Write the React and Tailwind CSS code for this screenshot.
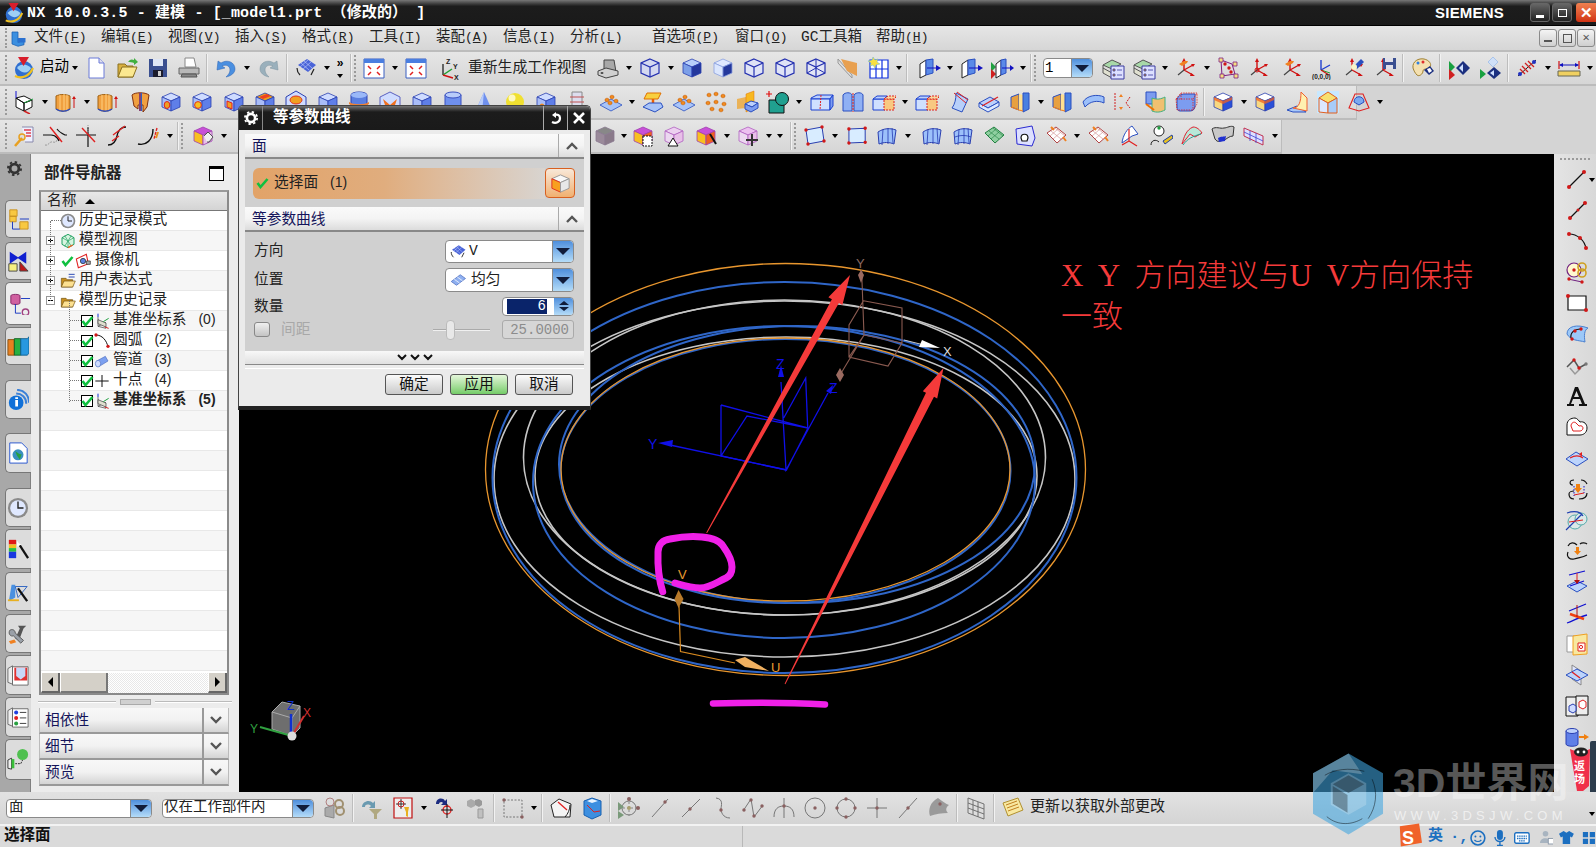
import React from "react";

const Cube = ({ t = "#cfdcff", l = "#a9bdf7", r = "#5f7fe8", s = "#2a3fb0", children }) => (
  <>
    <path d="M12 3l9 4-9 4-9-4z" fill={t} stroke={s} strokeWidth=".8" />
    <path d="M3 7l9 4v10l-9-4z" fill={l} stroke={s} strokeWidth=".8" />
    <path d="M21 7l-9 4v10l9-4z" fill={r} stroke={s} strokeWidth=".8" />
    {children}
  </>
);
const Wire = ({ s = "#2430b0", f = "#d4d8f0" }) => (
  <>
    <path d="M12 3l9 4v10l-9 4-9-4V7z" fill={f} stroke={s} strokeWidth="1.2" />
    <path d="M3 7l9 4 9-4M12 11v10" fill="none" stroke={s} strokeWidth="1.2" />
  </>
);
const Axes = ({ c = "#d01010", o = "#444" }) => (
  <>
    <path d="M10 14V4M10 14l9-5M10 14l9 5" fill="none" stroke={c} strokeWidth="1.4" />
    <path d="M10 2l-2 4h4zM21 8l-4 0 2 3zM21 20l-4-3-1 3z" fill={c} />
    <path d="M10 14l-6 5" stroke={o} strokeWidth="1.2" />
  </>
);
const Dot = ({ x, y, r = 1.7, c = "#d01818" }) => <circle cx={x} cy={y} r={r} fill={c} />;
const Orange = ({ x, y }) => <path d={`M${x} ${y}l2-1 2 1v2l-2 1-2-1z`} fill="#f08a20" stroke="#b85000" strokeWidth=".4" />;
const Pat = () => (
  <>
    <path d="M1 15l11-6 11 6-11 6z" fill="#a8c4f8" stroke="#2a4fc0" strokeWidth=".8" />
    <Orange x={6} y={9} /><Orange x={11} y={6} /><Orange x={15} y={10} /><Orange x={9} y={12} />
  </>
);
const Shell = () => (
  <>
    <path d="M3 7l8-3v16l-8-3z" fill="#e8a040" stroke="#2a4fc0" />
    <path d="M11 4l4 1v16l-4-1z" fill="#ffe090" />
    <path d="M15 3h6v16l-6 3z" fill="#4a80e0" stroke="#2a4fc0" />
    <path d="M3 17l8 3 4 1" fill="none" stroke="#f08020" strokeWidth="1.2" />
  </>
);
const Sheet = ({ c = "#9cc0fa", s = "#2a3fb0" }) => <path d="M3 8c6-4 12-4 18-2l-2 14c-5-2-10-2-15 0z" fill={c} stroke={s} />;
const Quad = ({ rot = "" }) => (
  <>
    <path d="M4 6l16-3 2 14-16 3z" fill="#d8ecff" stroke="#2a3fb0" transform={rot} />
    <g transform={rot}><Dot x={4} y={6} /><Dot x={20} y={3} /><Dot x={22} y={17} /><Dot x={6} y={20} /></g>
  </>
);
const Stripes = ({ c = "#2438b0" }) => (
  <>
    <Sheet />
    <path d="M8 5l-1 16M13 4l0 16M17 4l1 15" stroke={c} strokeWidth=".8" />
  </>
);
const Face = ({ grid }) => (
  <>
    <path d="M3 9l9-6 10 8-9 8z" fill={grid ? "#8fcfa0" : "#fff"} stroke={grid ? "#208040" : "#b04040"} />
    <path d="M7 7l10 8M11 4l10 8M6 12l8-7M9 15l8-7" stroke={grid ? "#208040" : "#c88"} strokeWidth=".6" />
  </>
);

const I = {
  start: (
    <>
      <circle cx="12" cy="14" r="9" fill="#2f6fd0" />
      <path d="M5 12c4-5 10-4 14 0-2 5-8 7-14 0z" fill="#9fd0f5" />
      <path d="M3 20c6 3 14 1 18-8" stroke="#f0c020" strokeWidth="2.2" fill="none" />
      <path d="M6 1h11l-5.500 9z" fill="#d81e2c" />
    </>
  ),
  doc: (
    <>
      <path d="M5 2h10l5 5v15H5z" fill="#fff" stroke="#6a7ad8" />
      <path d="M15 2v5h5" fill="#dde" stroke="#6a7ad8" />
    </>
  ),
  folder: (
    <>
      <path d="M3 8h7l2 2h6v11H3z" fill="#d8b040" stroke="#8a7020" />
      <path d="M3 21l4-10h15l-4 10z" fill="#fbe890" stroke="#8a7020" />
      <path d="M13 6c2-3 4-3 6-2V2l4 4-4 3V7c-2-1-4-1-6-1z" fill="#40b040" />
    </>
  ),
  save: (
    <>
      <path d="M3 3h18v18H3z" fill="#3a4f90" />
      <path d="M7 3h10v7H7z" fill="#dfe6f5" />
      <path d="M7 14h10v7H7z" fill="#1c1c2c" />
      <path d="M12 15h3v5h-3z" fill="#d0d0d0" />
    </>
  ),
  print: (
    <>
      <path d="M8 2h9l2 9H8z" fill="#fff" stroke="#888" />
      <path d="M2 12h20v6H2z" fill="#b8b8b8" stroke="#666" />
      <path d="M5 18h14l1 3H4z" fill="#888" stroke="#555" />
    </>
  ),
  undo: <path d="M4 5l-1 9 8-2-3-2c4-2 8 0 8 4 0 3-2 5-4 7 5-1 9-4 9-8 0-7-8-10-14-6z" fill="#4a8fe0" stroke="#2a60b0" strokeWidth=".5" />,
  redo: <path d="M20 5l1 9-8-2 3-2c-4-2-8 0-8 4 0 3 2 5 4 7-5-1-9-4-9-8 0-7 8-10 14-6z" fill="#9ab0bc" stroke="#7a909c" strokeWidth=".5" />,
  surf: (
    <>
      <path d="M4 9l9-6 9 6-8 7z" fill="#4a64d8" />
      <path d="M7 7l8 7M10 5l8 7M6 11l8-7M9 13l8-7" stroke="#c8d4ff" strokeWidth=".6" />
      <path d="M3 12c0 3 1 5 3 7M20 13l-3 6" stroke="#222" strokeWidth="1.2" fill="none" />
    </>
  ),
  fit: (
    <>
      <path d="M2 3h20v19H2z" fill="#fff" stroke="#3a5fc0" />
      <path d="M2 3h20v4H2z" fill="#4a7ee0" />
      <path d="M6 10l3 3M18 10l-3 3M6 19l3-3M18 19l-3-3" stroke="#e02020" strokeWidth="1.5" />
    </>
  ),
  csysc: (
    <>
      <path d="M7 19V8" stroke="#111" strokeWidth="1.2" />
      <path d="M7 19l9-6" stroke="#20a030" strokeWidth="1.5" />
      <path d="M7 19l10 3" stroke="#d01010" strokeWidth="1.5" />
      <text x="10" y="8" fontSize="7" fontWeight="700" fontFamily="Liberation Sans" fill="#222">Z</text>
      <text x="17" y="13" fontSize="7" fontWeight="700" fontFamily="Liberation Sans" fill="#222">Y</text>
      <text x="18" y="24" fontSize="7" fontWeight="700" fontFamily="Liberation Sans" fill="#222">X</text>
    </>
  ),
  part: (
    <>
      <path d="M8 4h10l2 12H8z" fill="#a8a8a8" stroke="#444" />
      <path d="M2 15l8-3 12 3v4l-12 3-8-3z" fill="#d0d0d0" stroke="#444" />
      <ellipse cx="6" cy="17" rx="1.500" ry="1" fill="#444" />
    </>
  ),
  wire: <Wire />,
  solid: <Cube t="#b8d0fa" l="#7c9fe8" r="#24389c" />,
  solid2: <Cube t="#dfe8ff" l="#dbe6fd" r="#24389c" s="#8aa0e0" />,
  wirel: <Wire f="#dfe3f6" />,
  wire3: (
    <>
      <Wire f="#e2e5f5" />
      <path d="M3 17l9-5 9 5M12 3v9" stroke="#2430b0" fill="none" />
    </>
  ),
  clip: (
    <>
      <path d="M3 3l14 16v3L3 7z" fill="#ddd" stroke="#999" />
      <path d="M6 3l16 4v13L12 15z" fill="#e8a050" />
    </>
  ),
  grid: (
    <>
      <path d="M4 4h18v18H4zM10 4v18M16 4v18M4 13h18" fill="#fff" stroke="#1030e0" strokeWidth="1.2" />
      <path d="M7 1l2 3 3-1-1 3 3 2-4 1-1 3-2-3-3 1 1-3-3-2 4-1z" fill="#f8e040" stroke="#60b0d0" strokeWidth=".5" />
    </>
  ),
  mv1: (
    <>
      <path d="M3 8l6-4v15l-6 3z" fill="#fff" stroke="#222" />
      <path d="M9 4l7-1v14l-7 2z" fill="#5a8ae8" stroke="#2a4fc0" />
      <path d="M10 12h10" stroke="#1010c0" />
      <path d="M24 12l-5-3v6z" fill="#1010c0" />
    </>
  ),
  mv2: (
    <>
      <path d="M1 6l5 5-5 5z" fill="#20a040" />
      <path d="M1 13l5 5-5 5z" fill="#d02020" />
      <path d="M6 8l5-4v15l-5 3z" fill="#fff" stroke="#222" />
      <path d="M11 4l5-1v14l-5 2z" fill="#5a8ae8" stroke="#2a4fc0" />
      <path d="M12 12h9" stroke="#1010c0" />
      <path d="M24 12l-4-3v6z" fill="#1010c0" />
    </>
  ),
  layer: (
    <>
      <path d="M2 9l9-5 9 4-9 5z" fill="#a8d8a8" stroke="#555" />
      <path d="M2 12l9 5 0 5-9-5zM2 9v3" fill="#e0e0d0" stroke="#555" />
      <path d="M10 10h13v13H10z" fill="#dde0ff" stroke="#3a3aa0" />
      <path d="M12 13h2v2h-2zM12 18h2v2h-2zM16 14h5M16 19h5" fill="#e0a020" stroke="#3a3aa0" strokeWidth=".8" />
    </>
  ),
  oaxes: (
    <>
      <Axes />
      <path d="M5 8l5-3h4l-1 2-5 3z" fill="#f08020" />
    </>
  ),
  dimbox: (
    <>
      <path d="M5 4l11 4 3 10-13 2z" fill="none" stroke="#802080" />
      <Dot x={9} y={8} /><Dot x={15} y={16} /><Dot x={13} y={12} />
      <path d="M3 2h4v4H3zM17 6h4v4h-4zM18 18h4v4h-4zM4 18h4v4H4z" fill="#f4e080" stroke="#802080" strokeWidth=".8" />
    </>
  ),
  axo: (
    <>
      <Axes />
      <circle cx="10" cy="14" r="2" fill="none" stroke="#d01010" />
    </>
  ),
  axp: (
    <>
      <path d="M10 14V4M10 14l9-5" fill="none" stroke="#2040d0" strokeWidth="1.4" />
      <path d="M10 14l9 3" stroke="#20a030" />
      <path d="M10 14l8 5" stroke="#d01010" strokeWidth="1.3" />
      <text x="1" y="23" fontSize="6.500" fontFamily="Liberation Sans" fontWeight="700" fill="#222">(0,0,0)</text>
    </>
  ),
  axt: (
    <>
      <Axes />
      <path d="M12 10l7-7 3 3-7 7z" fill="#2a4fc0" />
      <circle cx="12" cy="11" r="3" fill="#f8f4c8" />
    </>
  ),
  axs: (
    <>
      <Axes />
      <path d="M10 2h13v11H10z" fill="#3a4f90" />
      <path d="M12 2h8v4h-8zM13 9h7v4h-7z" fill="#e0e0e8" />
    </>
  ),
  palette: (
    <>
      <path d="M3 12C2 5 9 2 14 3s8 5 6 8-7 1-7 4-4 6-6 4-3-4-4-7z" fill="#f4e0b0" stroke="#a08030" />
      <Dot x={8} y={7} r={1.500} c="#3080e0" /><Dot x={13} y={6} r={1.500} c="#e03030" />
      <path d="M14 14l6-4 4 5-5 4z" fill="#1c3080" />
      <path d="M17 13l3-1 2 3-3 2z" fill="#fff" />
    </>
  ),
  prev: (
    <>
      <path d="M2 5l6 6-6 6z" fill="#18a040" />
      <path d="M2 13l6 6-6 5z" fill="#d02020" />
      <path d="M9 12l7-7 7 7-7 7z" fill="#1c3080" />
      <path d="M12 12l4-4v8z" fill="#cfe0ff" />
    </>
  ),
  next: (
    <>
      <path d="M2 13l6 5-6 5z" fill="#18a040" />
      <path d="M10 6l5-5 5 5-5 5z" fill="#cfe0f8" stroke="#8ab0e8" strokeWidth=".6" />
      <path d="M9 17l7-6 7 6-7 6z" fill="#1c3080" />
      <path d="M12 17l4-3v6z" fill="#cfe0ff" />
    </>
  ),
  measure: (
    <>
      <path d="M3 20L21 4" stroke="#222" />
      <path d="M7 10l6 6M10 7l6 6M13 5l6 6M5 13l5 5" stroke="#d02020" strokeWidth="1.3" />
      <Dot x={5} y={18} r={2} c="#2030c0" /><Dot x={19} y={6} r={2} c="#2030c0" />
    </>
  ),
  ruler: (
    <>
      <path d="M2 5v8M22 5v8" stroke="#d01010" strokeWidth="1.2" />
      <path d="M3 9h18" stroke="#1010c0" />
      <path d="M2 9l4-2v4zM22 9l-4-2v4z" fill="#1010c0" />
      <path d="M1 15h22v5H1z" fill="#f0d060" stroke="#665" />
    </>
  ),
  orient: (
    <>
      <path d="M4 8l8 5 8-3-8-4zM4 8v9l8 4v-8zM12 21l8-4v-7l-8 3z" fill="#fff" stroke="#111" />
      <path d="M4 8V1" stroke="#1010d0" />
      <path d="M12 13l9-4" stroke="#20a040" />
      <path d="M12 21l6 3" stroke="#d02020" strokeWidth="1.5" />
    </>
  ),
  extr: (
    <>
      <path d="M2 6c4-2 10-2 14 0v13c-4 3-10 3-14 0z" fill="#f0a040" stroke="#a06010" />
      <path d="M6 5v17M10 4v18M13 5v16" stroke="#ffd080" />
      <path d="M2 19c4 3 10 3 14 0" stroke="#3050c0" fill="none" strokeWidth="1.5" />
      <path d="M20 8v10" stroke="#d01010" />
      <path d="M20 6l-2 3h4z" fill="#d01010" />
    </>
  ),
  rev: (
    <>
      <path d="M4 5c3-3 13-3 17 0l-2 12-4 5v-7h-5v4l-4-3z" fill="#f0a040" stroke="#803010" />
      <path d="M11 3h3v18h-3z" fill="#3060c0" />
      <path d="M12 3v18" stroke="#e02020" />
    </>
  ),
  hole: (
    <Cube><ellipse cx="8" cy="15" rx="2.800" ry="3.500" fill="#f0a020" stroke="#e02020" /></Cube>
  ),
  boss: (
    <Cube><circle cx="8" cy="15" r="3.400" fill="#f8c020" stroke="#e03020" /></Cube>
  ),
  pocket: (
    <Cube><path d="M5 11l5 2v6l-5-2z" fill="#f0a020" stroke="#e02020" /></Cube>
  ),
  slot: (
    <Cube t="#e8a020"><path d="M6 7l8-3 4 2-8 3z" fill="#f04020" /></Cube>
  ),
  hexbox: (
    <>
      <path d="M12 1l10 6v11l-10 5-10-5V7z" fill="#cfdcff" stroke="#2a3fb0" />
      <ellipse cx="12" cy="10" rx="6" ry="4" fill="#f0a020" stroke="#e03020" />
    </>
  ),
  plain: <Cube />,
  stack: (
    <>
      <path d="M4 5c0-4 16-4 16 0v15c0 3-16 3-16 0z" fill="#5a7ee0" stroke="#2a3fb0" />
      <ellipse cx="12" cy="5" rx="8" ry="3" fill="#9ab8f8" />
      <path d="M2 12c4 3 16 3 20 0v2c-4 3-16 3-20 0z" fill="#f08030" />
    </>
  ),
  octa: (
    <>
      <path d="M12 2l10 5v11l-10 5-10-5V7z" fill="#cfdcff" stroke="#5a60c0" />
      <path d="M5 9l7 6 7-6-3 9h-8z" fill="#f07020" />
    </>
  ),
  cyl: (
    <>
      <path d="M4 5v15c0 3 16 3 16 0V5z" fill="#6f90ee" stroke="#3a50c0" />
      <ellipse cx="12" cy="5" rx="8" ry="3" fill="#b8ccfa" stroke="#3a50c0" />
    </>
  ),
  cone: (
    <>
      <path d="M12 2L4 20c2 3 14 3 16 0z" fill="#6f90ee" />
      <path d="M12 2l-8 18c2 1 4 2 6 2z" fill="#b8ccfa" />
    </>
  ),
  sphere: (
    <>
      <circle cx="12" cy="12" r="9" fill="#f0e030" />
      <circle cx="9" cy="8" r="3.500" fill="#fdf8c0" />
      <path d="M3 17h18v5H3z" fill="#dcdcdc" />
    </>
  ),
  sbox: (
    <Cube><circle cx="8" cy="16" r="2" fill="#f02020" stroke="#f0a020" /></Cube>
  ),
  thread: (
    <>
      <path d="M7 2h10v20H7z" fill="#dde" stroke="#888" />
      <path d="M5 7h14M5 12h14M5 17h14" stroke="#c05050" />
    </>
  ),
  pat: <Pat />,
  emboss: (
    <>
      <path d="M6 3h14l-3 6H3z" fill="#f8d040" stroke="#e07000" />
      <path d="M12 9v5" stroke="#f06000" strokeWidth="2.500" />
      <path d="M2 17l6-4h12l2 4-8 5z" fill="#a8c4f8" stroke="#2a4fc0" />
    </>
  ),
  cluster: (
    <>
      <Orange x={3} y={4} /><Orange x={10} y={3} /><Orange x={17} y={5} />
      <Orange x={2} y={12} /><Orange x={10} y={11} /><Orange x={18} y={13} />
      <Orange x={6} y={18} /><Orange x={15} y={19} />
    </>
  ),
  mirror: (
    <>
      <path d="M2 9l9-2v11l-9 1z" fill="#f0a020" opacity=".7" />
      <path d="M11 4l8-3v17l-8 4z" fill="#f8b820" stroke="#e07000" strokeWidth=".5" />
      <path d="M10 14l6-3 7 2-6 4z" fill="#bcd0fc" stroke="#2a4fc0" />
      <path d="M10 14v5l6 3 7-4v-5l-6 4z" fill="#7c9cf0" stroke="#2a4fc0" />
    </>
  ),
  union: (
    <>
      <path d="M3 10h15v13H3z" fill="#20a090" stroke="#111" />
      <circle cx="16" cy="9" r="6.500" fill="#20a090" stroke="#111" />
      <path d="M0 4h6M3 1v6" stroke="#e01010" strokeWidth="1.2" />
    </>
  ),
  split: (
    <>
      <path d="M1 8l6-3h16l-3 4H1z" fill="#bcd0fc" stroke="#1a40d0" />
      <path d="M1 9h19v11H1z" fill="#cfe0ff" stroke="#1a40d0" />
      <path d="M20 9l3-4v11l-3 4z" fill="#7c9cf0" stroke="#1a40d0" />
      <path d="M11 5l-1 15" stroke="#e02020" strokeDasharray="2 1" />
    </>
  ),
  rib: (
    <>
      <path d="M2 5c2-3 8-3 9 0v16H2z" fill="#8fb0f4" stroke="#2a4fc0" />
      <path d="M13 5c2-3 8-3 9 0v16h-9z" fill="#8fb0f4" stroke="#2a4fc0" />
      <path d="M12 3v19" stroke="#e02020" strokeDasharray="2 1" />
    </>
  ),
  subbox: (
    <>
      <path d="M1 9h12v11H1z" fill="#cfe0ff" stroke="#1a40d0" />
      <path d="M1 9l4-3h10l-3 3z" fill="#bcd0fc" stroke="#1a40d0" />
      <path d="M12 9h10v11H12z" fill="#f8c880" stroke="#e02020" strokeDasharray="2 1" />
      <path d="M12 9l4-3h9l-3 3z" fill="#f8d8a0" stroke="#e02020" strokeDasharray="2 1" />
    </>
  ),
  sheetcut: (
    <>
      <path d="M10 3l12 6-6 13-10-4c3-4 4-9 4-15z" fill="#b8d0fa" stroke="#2a4fc0" />
      <path d="M8 3l12 10M11 2l11 8" stroke="#e02020" />
    </>
  ),
  slice: (
    <>
      <path d="M2 13l11-6 9 5-11 6z" fill="#bcd0fc" stroke="#2a4fc0" />
      <path d="M2 13v4l9 5 11-6v-4l-11 6z" fill="#dce8ff" stroke="#2a4fc0" />
      <path d="M5 16l16-9" stroke="#e02020" strokeWidth="1.200" />
    </>
  ),
  shell: <Shell />,
  band: <path d="M2 12c4-7 15-8 21-5v6c-6-3-14-2-19 4z" fill="#9cc0fa" stroke="#2a4fc0" />,
  offs: (
    <>
      <path d="M3 3v18M18 7l-4 6 4 5" stroke="#d02020" strokeDasharray="2 1" fill="none" />
      <path d="M9 4l-2 3h4zM9 20l-2-3h4z" fill="#f08020" />
    </>
  ),
  trans: (
    <>
      <path d="M3 2h10v12H3z" fill="#7c9cf0" stroke="#2a4fc0" />
      <path d="M9 8c5 2 9 1 13-1v13c-4 2-8 3-13 1z" fill="#f0c070" stroke="#40b080" />
      <path d="M3 14l8 6" stroke="#f07000" strokeWidth="2" />
    </>
  ),
  round: (
    <>
      <path d="M3 11c0-5 4-7 8-7h10v12c0 3-2 5-5 5H6c-2 0-3-2-3-4z" fill="#7c9cf0" stroke="#2a4fc0" />
      <path d="M2 9l5-6h16v11l-4 6H3zM7 3v7M2 9h17v11M19 9l4-6" fill="none" stroke="#e02020" strokeDasharray="1.500 1" strokeWidth=".8" />
    </>
  ),
  cham: (
    <Cube t="#fff" l="#f8d880" r="#2a50d8"><path d="M3 7l9 4v3l-9-4zM12 11l9-4v3l-9 4z" fill="#f06020" opacity=".75" /></Cube>
  ),
  corner: (
    <>
      <path d="M2 20l10-4 9 6H8z" fill="#a8c8f8" stroke="#2a4fc0" />
      <path d="M8 18c6 0 8-6 8-16l6 6v13z" fill="#fff0b0" stroke="#f06030" />
    </>
  ),
  taper: (
    <>
      <path d="M1 1h22v22H1z" fill="#c8e8ff" />
      <path d="M3 8l9-6 9 6-9 5z" fill="#f8e070" stroke="#e06020" />
      <path d="M3 8l9 5v10l-9-1z" fill="#dce8ff" stroke="#e06020" />
      <path d="M21 8l-9 5v10h9z" fill="#a8ccf8" stroke="#e06020" />
    </>
  ),
  draft: (
    <>
      <path d="M2 18l6-14h8l6 14-10 3z" fill="none" stroke="#e02020" strokeWidth="1.100" />
      <path d="M7 12c0-7 10-7 10 0l-5 3z" fill="#7caaf0" stroke="#2a4fc0" />
    </>
  ),
  regtool: (
    <>
      <path d="M10 3h11v15h-8" fill="#eef0ff" stroke="#88a" />
      <path d="M12 6h7M14 9h5M14 12h5" stroke="#e04050" strokeWidth="1.400" />
      <path d="M3 22l7-8" stroke="#e8a020" strokeWidth="2.500" />
      <circle cx="10" cy="13" r="3" fill="none" stroke="#e8a020" strokeWidth="1.500" />
    </>
  ),
  tr1: (
    <>
      <path d="M0 11h8c6 0 8 6 8 6M14 5c2 3 8 6 8 6H24" fill="none" stroke="#111" strokeWidth="1.200" />
      <path d="M2 21c4 1 4-4 8-3s3-1 4-2" fill="none" stroke="#999" strokeDasharray="2 1" />
      <path d="M7 3l12 15" stroke="#e02020" strokeWidth="1.400" />
    </>
  ),
  tr2: (
    <>
      <path d="M1 11h20M13 3v20" fill="none" stroke="#111" strokeWidth="1.200" />
      <path d="M13 1v8" stroke="#999" strokeDasharray="1 1" />
      <path d="M7 4l13 14" stroke="#e02020" strokeWidth="1.400" />
    </>
  ),
  tr3: (
    <>
      <path d="M2 21c6 0 8-4 9-9s3-9 9-9" fill="none" stroke="#111" strokeWidth="1.300" />
      <path d="M7 11l12-9M6 17l7-5" stroke="#e02020" strokeWidth="1.300" />
    </>
  ),
  tr4: (
    <>
      <path d="M1 20c8 2 15-4 15-15" fill="none" stroke="#111" strokeWidth="1.400" />
      <path d="M20 4l-3 11" stroke="#e02020" strokeWidth="1.400" strokeDasharray="3 1" />
      <path d="M21 8l-2 6" stroke="#e89020" strokeWidth="2" />
    </>
  ),
  purple: (
    <Cube t="#c850d8" l="#f8c020" r="#e8c0e8" s="#a040b0"><path d="M13 12l4-4 5 5-4 5-2 0" fill="#f0f0f0" stroke="#333" strokeWidth=".8" /></Cube>
  ),
  purpleg: <Cube t="#888" l="#9a8a9a" r="#8a7a8a" s="#8a7a90" />,
  pbox: (
    <Cube t="#c850d8" l="#f8c020" r="#f06020" s="#a040b0"><path d="M12 12h9v10h-9z" fill="#fff" stroke="#111" strokeDasharray="2 1" /></Cube>
  ),
  ptri: (
    <Cube t="#ecd0f0" l="#ecd8f0" r="#e8c0e8" s="#b060c0"><path d="M6 22l5-8 5 8z" fill="#fff" stroke="#111" /></Cube>
  ),
  pwand: (
    <Cube t="#c850d8" l="#f8c020" r="#f06020" s="#a040b0"><path d="M16 10l6 10" stroke="#111" strokeWidth="2" /></Cube>
  ),
  pmove: (
    <Cube t="#ecc0f0" l="#ecd8f0" r="#e8c0e8" s="#b060c0"><path d="M16 10v12M10 16h12" stroke="#333" strokeWidth="2" /></Cube>
  ),
  quad: <Quad />,
  quad2: <Quad rot="rotate(8 12 12)" />,
  stripe: <Stripes />,
  stripe2: (
    <>
      <Stripes />
      <path d="M4 13c5-2 11-2 16 0" stroke="#2438b0" strokeWidth=".8" fill="none" />
    </>
  ),
  gsurf: <Face grid />,
  holes: (
    <>
      <path d="M3 5l16-3 3 12-3 8-15-2z" fill="#dde0ff" stroke="#2a2ad0" />
      <path d="M8 14c0-5 7-5 7 0l-1 3H9z" fill="#fff" stroke="#111" strokeWidth="1.200" />
    </>
  ),
  wface: (
    <>
      <Face />
      <path d="M7 3l3 3M19 13l3 4" stroke="#f08020" strokeWidth="2" />
    </>
  ),
  corners: (
    <>
      <path d="M5 19c1-8 5-14 10-17l6 8-6 2z" fill="#fff" stroke="#2a4fc0" />
      <path d="M12 5v12M12 17l8 5M12 17l-7 4" stroke="#e02020" strokeWidth="1.200" />
    </>
  ),
  law: (
    <>
      <circle cx="10" cy="7" r="5" fill="#fff" stroke="#222" />
      <Dot x={10} y={4} c="#20a040" />
      <path d="M2 21c0-5 5-6 8-3" fill="none" stroke="#222" />
      <path d="M14 17l9-6 1 3-8 6z" fill="#e8c020" stroke="#2040a0" />
    </>
  ),
  flow: (
    <>
      <path d="M2 20c2-7 4-14 11-17 4 0 7 3 9 6l-7 4-5-3z" fill="#b8e8d8" stroke="#e02030" />
      <path d="M3 21c4-6 10-9 18-11" stroke="#20a090" fill="none" />
    </>
  ),
  bw: (
    <>
      <path d="M1 5c4-3 8 0 12-1 3 0 7-3 10-1l-1 9c-4 0-6 3-9 4-5 1-6 3-9-1z" fill="#c8c8c8" stroke="#333" />
      <path d="M7 14c3-2 6-1 8-2l-1 5-6 1z" fill="#2030d0" />
    </>
  ),
  rgrid: (
    <>
      <path d="M2 4l19 8v9L2 12z" fill="#dde0ff" stroke="#c03050" />
      <path d="M8 7v10M14 9v10M2 8l19 9" stroke="#4040d0" strokeWidth=".8" />
    </>
  ),
  // right rail
  rline: (
    <>
      <path d="M4 20L19 5" stroke="#111" strokeWidth="1.200" />
      <Dot x={4} y={20} r={2} /><Dot x={19} y={5} r={2} />
    </>
  ),
  rline2: (
    <>
      <path d="M5 20L20 5" stroke="#111" strokeWidth="1.200" />
      <Dot x={5} y={20} r={2} /><Dot x={13} y={12} r={1.500} /><Dot x={20} y={5} r={2} />
    </>
  ),
  rarc: (
    <>
      <path d="M4 5c8 0 16 6 17 15" fill="none" stroke="#111" strokeWidth="1.200" />
      <Dot x={4} y={5} r={2} /><Dot x={15} y={9} r={2} /><Dot x={21} y={19} r={2} />
    </>
  ),
  rcirc: (
    <>
      <circle cx="9" cy="10" r="7" fill="#fff8d0" stroke="#702080" strokeWidth="1.200" />
      <circle cx="17" cy="7" r="4" fill="none" stroke="#d0a020" strokeWidth="1.600" />
      <circle cx="17" cy="13" r="4" fill="none" stroke="#d0a020" strokeWidth="1.600" />
      <path d="M3 19l14 3" stroke="#702080" />
      <Dot x={9} y={10} /><Dot x={4} y={19} /><Dot x={17} y={22} />
    </>
  ),
  rrect: (
    <>
      <path d="M3 5h18v14H3z" fill="#fff" stroke="#111" strokeWidth="1.200" />
      <Dot x={3} y={5} r={2} /><Dot x={21} y={19} r={2} />
    </>
  ),
  rsurf: (
    <>
      <path d="M2 12c0-8 10-10 21-6-4 2-4 8-3 14-7-2-14-1-18-8z" fill="#9cc8f8" stroke="#4a80d0" />
      <path d="M6 16c-1-5 3-9 10-9" fill="none" stroke="#111" strokeWidth="1.200" />
      <Dot x={7} y={17} /><Dot x={16} y={7} /><Dot x={10} y={9} />
    </>
  ),
  rpoly: (
    <>
      <path d="M2 14l7-7 5 8 7-4" fill="none" stroke="#555" strokeWidth="1.500" />
      <path d="M5 15l5 6 6-6" fill="none" stroke="#999" strokeWidth="1.500" />
      <Dot x={9} y={7} /><Dot x={14} y={15} /><Dot x={21} y={11} c="#777" />
    </>
  ),
  ra: <path d="M10 3h3l7 17h2v2h-8v-2h3l-2-5H8l-2 5h3v2H2v-2h2zM9 13h5l-2.500-6z" fill="#111" />,
  rheart: (
    <>
      <path d="M2 10c0-5 4-7 8-7 2 0 4 3 5 4 4-1 7 2 7 6 0 5-4 7-7 7H2z" fill="#fff" stroke="#111" />
      <path d="M6 11c0-3 3-5 5-3l3 3c3-1 4 1 4 2 0 2-2 3-3 3H8z" fill="none" stroke="#e02020" />
    </>
  ),
  rrib: (
    <>
      <path d="M1 13l10-7 12 7-11 7z" fill="#bcd4fc" stroke="#2a4fc0" />
      <path d="M5 12c5-3 9-3 13 0" fill="none" stroke="#e02020" strokeWidth="1.200" />
      <path d="M14 8l3-2v5z" fill="#e02020" />
    </>
  ),
  rcurv: (
    <>
      <path d="M9 3C4 3 4 8 8 8M16 3c4 0 5 2 6 4M9 22c-4 0-5-2-5-5 0-2 3-3 5-3M14 22c6 0 8-3 8-6" fill="none" stroke="#111" strokeWidth="1.200" />
      <path d="M9 9v10M19 9v7" stroke="#1010d0" strokeDasharray="1.500 1.500" />
      <path d="M11 7h4v4h2l-4 5-4-5h2z" fill="#f08010" />
      <path d="M9 18l10-2" stroke="#e02020" />
    </>
  ),
  rsph: (
    <>
      <ellipse cx="10" cy="14" rx="7" ry="7" fill="#dce8e8" stroke="#5aa" />
      <circle cx="16" cy="11" r="6" fill="#dce8e8" stroke="#5aa" />
      <path d="M2 5c8-3 14-1 16 3M1 22L17 6" fill="none" stroke="#2040b0" strokeWidth="1.200" />
      <path d="M4 14l14-2" stroke="#e02020" />
    </>
  ),
  rwav: (
    <>
      <path d="M3 7c2-4 6-4 9-1M15 5c2-2 6-1 7 0M3 13c-2 5 2 8 6 7 5-2 8-1 13-4" fill="none" stroke="#111" strokeWidth="1.200" />
      <path d="M11 8h3v4h2l-3.500 4-3.500-4h2z" fill="#f08010" />
    </>
  ),
  rproj: (
    <>
      <path d="M2 16l10-5 10 5-10 6z" fill="#bcd4fc" stroke="#2a4fc0" />
      <path d="M4 5l16-4M5 16l14-5" stroke="#1010d0" strokeWidth="1.200" />
      <path d="M12 3v10" stroke="#e02020" />
      <path d="M9 10h6l-3 4z" fill="#b01010" />
    </>
  ),
  rint: (
    <>
      <path d="M4 10L21 3M2 22c6-2 12-6 20-8" stroke="#1010d0" strokeWidth="1.300" fill="none" />
      <path d="M5 13l14 5" stroke="#f04010" strokeWidth="2.500" />
      <path d="M12 4v12" stroke="#b01010" />
    </>
  ),
  rsec: (
    <>
      <path d="M2 4h9v16H2z" fill="#fff" stroke="#999" />
      <path d="M8 4l14-2v20l-14 1z" fill="#f8e8a0" stroke="#f0a020" />
      <path d="M13 11h7v8h-7z" fill="#fff" stroke="#e02020" />
      <circle cx="16" cy="15" r="1.600" fill="none" stroke="#e02020" />
    </>
  ),
  rsec2: (
    <>
      <path d="M7 2l9 6v14l-9-6z" fill="#e0e6ff" stroke="#888" />
      <path d="M1 12l11-6 11 6-11 6z" fill="#bcd4fc" stroke="#2a4fc0" />
      <path d="M7 9l8 6" stroke="#e02020" strokeWidth="1.400" />
    </>
  ),
  rwin: (
    <>
      <path d="M1 3h12v19H1z" fill="#eee" stroke="#111" />
      <path d="M11 2h12v19H11z" fill="#eee" stroke="#111" />
      <path d="M4 12l4-2 3 2v5l-3 2-4-2z" fill="#cfdcff" stroke="#2a3fb0" />
      <path d="M14 8l4-2 3 2v5l-3 2-4-2z" fill="#fff" stroke="#e02020" />
    </>
  ),
  rext: (
    <>
      <path d="M1 6v13c0 3 12 3 12 0V6z" fill="#5f7fe8" stroke="#2a3fb0" />
      <ellipse cx="7" cy="6" rx="6" ry="2.500" fill="#bcd0fc" stroke="#2a3fb0" />
      <path d="M14 12h6" stroke="#f08010" strokeWidth="2" />
      <path d="M24 12l-5-3v6z" fill="#f08010" />
    </>
  ),
  // bottom bar
  asm: (
    <>
      <path d="M2 12l9-3v13l-9-2z" fill="#aaa" stroke="#888" />
      <circle cx="7" cy="6" r="4" fill="none" stroke="#b08080" />
      <circle cx="16" cy="8" r="4" fill="none" stroke="#a09070" strokeWidth="2" />
      <circle cx="17" cy="15" r="4" fill="none" stroke="#a09070" strokeWidth="2" />
    </>
  ),
  filt: (
    <>
      <path d="M2 11c0-6 8-8 11-4l2-2v7H9l2-2c-2-2-6-2-6 1z" fill="#6a9ab0" />
      <path d="M9 13h13l-5 5v5h-3v-5z" fill="#b0a880" />
    </>
  ),
  snapred: (
    <>
      <path d="M3 2h18v20H3z" fill="#eee" stroke="#c01010" strokeWidth="1.200" />
      <circle cx="10" cy="8" r="3" fill="none" stroke="#e02020" />
      <path d="M10 3v10M5 8h10" stroke="#111" strokeWidth=".8" />
      <path d="M13 11l5 0-1 5 0 5-2-1v-4z" fill="#e8b020" />
    </>
  ),
  snapc: (
    <>
      <path d="M3 8c0-6 7-7 9-3l2-2v6H8l2-2c-1-2-4-1-4 1z" fill="#1c2c80" />
      <circle cx="14" cy="14" r="4" fill="none" stroke="#e02020" strokeWidth="1.300" />
      <path d="M14 8v14M8 14h12" stroke="#111" />
    </>
  ),
  gear2: (
    <>
      <path d="M3 5l4-2 4 2v5l-4 2-4-2z" fill="#aaa" />
      <path d="M11 4l4-1 3 2v4l-3 2-4-2z" fill="#999" />
      <path d="M14 13h5v9h-5z" fill="#c0c0c0" stroke="#999" />
    </>
  ),
  selbox: (
    <>
      <path d="M3 4h18v17H3z" fill="none" stroke="#777" strokeDasharray="2 1.500" />
      <Dot x={3} y={4} c="#8a6060" /><Dot x={21} y={21} c="#8a6060" />
    </>
  ),
  view1: (
    <>
      <path d="M2 9l8-6 12 5-1 13H5z" fill="#f4f4f4" stroke="#222" />
      <path d="M9 6l9 8" stroke="#e02020" strokeWidth="1.400" />
      <path d="M16 21c3-3 5-8 5-12" stroke="#222" fill="none" />
    </>
  ),
  view2: (
    <>
      <path d="M4 5l8-3 9 3v14l-9 4-8-4z" fill="#3d8fe0" stroke="#1860b0" />
      <path d="M7 5l5-2 6 2-6 2z" fill="#e8f4ff" />
      <path d="M7 9l7 7 6-1" stroke="#e02020" fill="none" />
    </>
  ),
  gsnap: (
    <>
      <circle cx="12" cy="12" r="7" fill="none" stroke="#777" />
      <path d="M1 6l6 5-6 4zM1 15l6 4-6 4z" fill="#7a9a7a" />
      <path d="M12 2v20M2 12h20" stroke="#888" strokeDasharray="2 2" />
      <Dot x={12} y={12} r={2} c="#a8a070" /><Dot x={12} y={3} r={2} c="#8a6060" /><Dot x={21} y={12} r={2} c="#8a6060" />
    </>
  ),
  gl1: (
    <>
      <path d="M4 21L20 3" stroke="#777" /><Dot x={17} y={6} c="#8a6060" />
    </>
  ),
  gl2: (
    <>
      <path d="M3 21L21 3" stroke="#777" /><Dot x={11} y={13} c="#8a6060" />
    </>
  ),
  gl3: (
    <>
      <path d="M6 2c8 1 5 8 5 11s2 9 9 9" stroke="#777" fill="none" /><Dot x={11} y={14} c="#8a6060" />
    </>
  ),
  gl4: (
    <>
      <path d="M2 15l8-12 3 18 9-12" stroke="#777" fill="none" />
      <Dot x={3} y={14} c="#8a6060" /><Dot x={10} y={4} c="#8a6060" /><Dot x={13} y={20} c="#8a6060" /><Dot x={21} y={10} c="#8a6060" />
    </>
  ),
  gl5: (
    <>
      <path d="M2 21c0-8 4-11 10-11s10 3 10 11M12 2v20" stroke="#777" fill="none" /><Dot x={12} y={10} c="#8a6060" />
    </>
  ),
  gl6: (
    <>
      <circle cx="12" cy="12" r="10" fill="none" stroke="#777" /><Dot x={12} y={12} c="#8a6060" />
    </>
  ),
  gl7: (
    <>
      <circle cx="12" cy="12" r="9" fill="none" stroke="#777" />
      <Dot x={3} y={12} c="#8a6060" /><Dot x={21} y={12} c="#8a6060" /><Dot x={12} y={3} c="#8a6060" /><Dot x={12} y={21} c="#8a6060" />
    </>
  ),
  gl8: (
    <>
      <path d="M12 2v20M2 12h20" stroke="#777" /><Dot x={12} y={12} c="#8a6060" />
    </>
  ),
  gl9: (
    <>
      <path d="M3 22L21 2" stroke="#777" /><Dot x={12} y={12} c="#8a6060" />
    </>
  ),
  gsf: (
    <>
      <path d="M3 20c-2-6 0-14 8-18 4 3 8 6 11 7-4 3-3 6-1 8-6 0-13 1-18 3z" fill="#9a9a9a" />
      <Dot x={13} y={8} c="#8a6060" />
    </>
  ),
  gmesh: <path d="M4 2l16 6v15L4 17zM4 7l16 6M4 12l16 6M9 4v15M14 6v15" fill="#ddd" stroke="#666" strokeWidth=".9" />,
  note: (
    <>
      <path d="M2 7l15-5 5 12-15 6z" fill="#f8e8a0" stroke="#b09030" />
      <path d="M5 9l11-4M6 12l11-4M7 15l11-4" stroke="#c08020" />
    </>
  ),
};

const Ico = ({ n, size = "w-6 h-6" }) => (
  <svg viewBox="0 0 24 24" className={`${size} shrink-0`} aria-hidden="true">
    {I[n]}
  </svg>
);

const Caret = () => (
  <div className="w-[11px] flex justify-center items-center shrink-0">
    <div className="w-0 h-0 border-x-[3.5px] border-x-transparent border-t-[4px] border-t-black" />
  </div>
);

function Tools({ items }) {
  return items.map((it, i) => {
    if (it === "v") return <Caret key={i} />;
    if (it === "vs")
      return (
        <div key={i} className="w-[7px] flex justify-center items-center shrink-0">
          <div className="w-0 h-0 border-x-[3.5px] border-x-transparent border-t-[4px] border-t-black" />
        </div>
      );
    if (it === "|")
      return (
        <div key={i} className="w-[6px] flex justify-center items-center shrink-0">
          <div className="w-[2px] h-[28px] bg-[#f2f2f2] border-l border-[#bdbdbd]" />
        </div>
      );
    if (it === "#")
      return (
        <div key={i} className="w-[8px] flex justify-end items-center shrink-0">
          <div className="h-[26px] mr-[1px] border-l-2 border-dotted border-[#9a9a9a]" />
        </div>
      );
    if (it === "#s")
      return (
        <div key={i} className="w-[4px] flex items-center shrink-0">
          <div className="h-[26px] border-l-2 border-dotted border-[#9a9a9a]" />
        </div>
      );
    if (it.startsWith("w-")) return <div key={i} className={`${it} shrink-0`} />;
    return (
      <div key={i} className="w-[31px] flex justify-center items-center shrink-0">
        <Ico n={it} />
      </div>
    );
  });
}

const Arrow = () => (
  <div className="w-[21px] self-stretch rounded-r-[3px] bg-linear-to-b from-[#4f8fdc] to-[#b4dcf8] flex items-center justify-center border-l border-[#888]">
    <div className="w-0 h-0 border-x-[7px] border-x-transparent border-t-[7px] border-t-[#111c3a]" />
  </div>
);

function Combo({ className, children }) {
  return (
    <div className={`flex items-center bg-white border border-[#8a8a8a] rounded-[4px] overflow-hidden shrink-0 ${className}`}>
      <div className="flex-1 flex items-center min-w-0 h-full whitespace-nowrap">{children}</div>
      <Arrow />
    </div>
  );
}

// numbered suffix, the digits sit narrower than the mono stack
const Num = ({ children }) => <span className="ml-[12px] text-[14px] [font-family:'Liberation_Sans',sans-serif]">{children}</span>;

const t1a = ["#", "start"];
const t1b = ["v", "doc", "folder", "save", "print", "|", "undo", "v", "w-[1px]", "redo", "|", "surf", "v"];
const t1c = ["|", "#s", "fit", "v", "fit", "w-[1px]", "csysc"];
const t1d = ["w-[6px]", "part", "v", "wire", "v", "solid", "solid2", "wirel", "wirel", "wire3", "clip", "grid", "v", "|", "w-[3px]", "mv1", "v", "mv1", "mv2", "v", "|", "#s", "w-[5px]"];
const t1e = ["w-[4px]", "layer", "layer", "v", "oaxes", "v", "dimbox", "axo", "w-[2px]", "oaxes", "axp", "axt", "axs", "|", "palette", "|", "prev", "next", "|", "measure", "v", "ruler", "v"];
const t2 = ["#", "orient", "v", "extr", "v", "extr", "w-[1px]", "rev", "hole", "boss", "w-[1px]", "pocket", "slot", "hexbox", "w-[1px]", "plain", "stack", "octa", "w-[1px]", "plain", "cyl", "cone", "sphere", "sbox", "thread", "w-[3px]", "pat", "v", "emboss", "pat", "w-[1px]", "cluster", "mirror", "union", "v", "w-[2px]", "split", "rib", "subbox", "v", "w-[1px]", "subbox", "sheetcut", "slice", "shell", "v", "shell", "band", "offs", "trans", "round", "|", "cham", "v", "cham", "w-[1px]", "corner", "taper", "draft", "v"];
const t3 = ["#", "regtool", "tr1", "w-[1px]", "tr2", "tr3", "tr4", "v", "|", "#s", "w-[2px]", "purple", "v", "w-[360px]", "purpleg", "vs", "pbox", "ptri", "w-[1px]", "pwand", "v", "pmove", "v", "v", "w-[3px]", "|", "#s", "quad", "v", "quad2", "stripe", "v", "w-[3px]", "stripe", "stripe2", "gsurf", "holes", "wface", "v", "wface", "corners", "w-[1px]", "law", "flow", "bw", "rgrid", "v"];
const bottomA = ["w-[5px]", "asm", "|", "filt", "snapred", "v", "snapc", "gear2", "|", "selbox", "v", "|", "view1", "view2", "|", "gsnap", "gl1", "gl2", "gl3", "gl4", "gl5", "gl6", "gl7", "gl8", "gl9", "gsf", "|", "gmesh", "|", "note"];
const rail = ["rline", "rline2", "rarc", "rcirc", "rrect", "rsurf", "rpoly", "ra", "rheart", "rrib", "rcurv", "rsph", "rwav", "rproj", "rint", "rsec", "rsec2", "rwin", "rext"];

const menuWide = "w-[67px]";
const menus = [["文件", "F"], ["编辑", "E"], ["视图", "V"], ["插入", "S"], ["格式", "R"], ["工具", "T"], ["装配", "A"], ["信息", "I"]];

const barBg = "bg-linear-to-b from-[#e6e6e6] to-[#d6d6d6] border-b-2 border-[#bcbcbc] flex items-center";

function Menu({ label, k, className }) {
  return (
    <span className={`shrink-0 ${className}`}>
      {label}
      <span className="text-[13px]">(<span className="underline">{k}</span>)</span>
    </span>
  );
}

function TitleBar() {
  return (
    <div className="h-[26px] shrink-0 flex items-center bg-linear-to-b from-[#777] via-[#1c1c1c] via-25% to-[#1a1a1a] border-b border-black text-white relative">
      <div className="w-[27px] h-full flex items-center justify-center">
        <Ico n="start" size="w-[22px] h-[22px]" />
      </div>
      <div className="text-[15px] font-bold leading-none whitespace-pre pt-[2px] tracking-[0.14px]">NX 10.0.3.5 - 建模 - [_model1.prt （修改的） ]</div>
      <div className="ml-auto mr-[26px] text-[15px] font-bold tracking-[0.2px] [font-family:'Liberation_Sans',sans-serif] pt-[2px]">SIEMENS</div>
      <div className="w-[20px] h-[19px] rounded-[3px] border border-[#666] bg-linear-to-b from-[#666] to-[#222] flex items-end justify-center pb-[3px]">
        <div className="w-[8px] h-[3px] bg-white" />
      </div>
      <div className="w-[20px] h-[19px] ml-[2px] rounded-[3px] border border-[#666] bg-linear-to-b from-[#666] to-[#222] flex items-center justify-center">
        <div className="w-[9px] h-[8px] border border-white" />
      </div>
      <div className="w-[20px] h-[19px] ml-[4px] rounded-l-[3px] bg-linear-to-b from-[#f08050] to-[#d03010] flex items-center justify-center text-white font-bold text-[15px] leading-none [font-family:'Liberation_Sans',sans-serif]">✕</div>
    </div>
  );
}

function MenuBar() {
  const Mdi = ({ children }) => (
    <div className="w-[18px] h-[18px] ml-[1px] rounded-[3px] border border-[#8a8a8a] bg-linear-to-b from-[#f4f4f4] to-[#cfcfcf] flex items-center justify-center shrink-0">
      {children}
    </div>
  );
  return (
    <div className={`h-[26px] shrink-0 text-[14.5px] text-[#222] ${barBg}`}>
      <div className="w-[8px] flex justify-end shrink-0">
        <div className="h-[20px] mr-[1px] border-l-2 border-dotted border-[#9a9a9a]" />
      </div>
      <svg viewBox="0 0 24 24" className="w-[18px] h-[20px] shrink-0 ml-[1px] mr-[7px]" aria-hidden="true">
        <path d="M4 4h8v14l8-3v6l-8 2-8-3z" fill="#3b8fe0" stroke="#1a5fb0" />
        <path d="M12 12h10v6H12z" fill="#2a70d0" />
      </svg>
      {menus.map(([l, k]) => (
        <Menu key={k} label={l} k={k} className={menuWide} />
      ))}
      <Menu label="分析" k="L" className="w-[82px]" />
      <Menu label="首选项" k="P" className="w-[83px]" />
      <Menu label="窗口" k="O" className="w-[66px]" />
      <span className="w-[75px] shrink-0">GC工具箱</span>
      <Menu label="帮助" k="H" className="w-[80px]" />
      <div className="ml-auto flex items-center mr-[1px]">
        <Mdi><div className="w-[8px] h-[2px] mt-[6px] bg-[#555]" /></Mdi>
        <Mdi><div className="w-[9px] h-[9px] border border-[#555]" /></Mdi>
        <Mdi><span className="text-[#555] text-[12px] font-bold leading-none">✕</span></Mdi>
      </div>
    </div>
  );
}

function Toolbars() {
  return (
    <div className="shrink-0 bg-[#d4d4d4] text-[14.5px]">
      <div className={`h-[34px] ${barBg}`}>
        <Tools items={t1a} />
        <span className="w-[30px] shrink-0 pl-[1px] whitespace-nowrap">启动</span>
        <Tools items={t1b} />
        <div className="w-[16px] h-full shrink-0 flex flex-col items-center justify-center gap-[5px] text-[12px] leading-none font-bold">
          <span className="leading-[10px]">»</span>
          <div className="w-0 h-0 border-x-[3.5px] border-x-transparent border-t-[4px] border-t-black" />
        </div>
        <Tools items={t1c} />
        <span className="w-[123px] pl-[5px] shrink-0 whitespace-nowrap text-[#222] text-[14.8px]">重新生成工作视图</span>
        <Tools items={t1d} />
        <Combo className="w-[50px] h-[20px]">
          <span className="pl-[1px] text-[14px]">1</span>
        </Combo>
        <Tools items={t1e} />
      </div>
      <div className={`h-[34px] w-[1357px] border-r border-[#bcbcbc] ${barBg}`}>
        <Tools items={t2} />
      </div>
      <div className={`h-[34px] w-[1282px] border-r border-[#bcbcbc] ${barBg}`}>
        <Tools items={t3} />
      </div>
    </div>
  );
}

const tabs = [
  { n: "tbricks", cls: "mt-0 h-[38px]" },
  { n: "tcons", cls: "mt-[4px] h-[38px]" },
  { n: "tdb", cls: "mt-[2px] h-[43px] ml-[2px] w-[29px] bg-[#ededed]" },
  { n: "tbooks", cls: "mt-[2px] h-[38px]" },
  { n: "tinfo", cls: "mt-[15px] h-[39px]" },
  { n: "tweb", cls: "mt-[14px] h-[40px]" },
  { n: "tclock", cls: "mt-[15px] h-[39px]" },
  { n: "train", cls: "mt-[2px] h-[40px]" },
  { n: "trsurf", cls: "mt-[3px] h-[39px]" },
  { n: "ttool", cls: "mt-[3px] h-[39px]" },
  { n: "tw1", cls: "mt-[2px] h-[40px]" },
  { n: "tw2", cls: "mt-[2px] h-[40px]" },
  { n: "tnet", cls: "mt-[2px] h-[41px]" },
];

const TabIcons = {
  tbricks: (
    <>
      <path d="M3 2h8v7H3zM3 9h7v6H3z" fill="#f8c840" stroke="#c89020" />
      <path d="M14 15h9v8h-9z" fill="#f8c840" stroke="#c89020" />
      <path d="M6 15v8h8M14 12h10" stroke="#1030c0" fill="none" />
    </>
  ),
  tcons: (
    <>
      <path d="M3 2l9 6 9-6v13l-9-6-9 6z" fill="#1020d0" />
      <path d="M2 15h9v8H2z" fill="#f8f080" stroke="#444" />
      <path d="M14 23V13l9 10z" fill="#c01818" stroke="#444" />
    </>
  ),
  tdb: (
    <>
      <path d="M2 3c0-2 10-2 10 0v8c0 2-10 2-10 0z" fill="#d060a0" stroke="#802060" />
      <path d="M13 6h10M7 12v10h6" stroke="#1030c0" fill="none" />
      <circle cx="18" cy="21" r="3.500" fill="none" stroke="#a04080" strokeWidth="1.500" />
    </>
  ),
  tbooks: (
    <>
      <path d="M1 5h7v17H1z" fill="#e88020" stroke="#885010" />
      <path d="M8 4h7v18H8z" fill="#28b040" stroke="#106020" />
      <path d="M15 4h7l2-2v18l-2 2h-7z" fill="#2898e0" stroke="#106090" />
    </>
  ),
  tinfo: (
    <>
      <circle cx="10" cy="15" r="8" fill="#1070d8" />
      <path d="M9 9h3v2H9zM9 12h3v7H9z" fill="#fff" />
      <path d="M10 5c6 0 11 4 11 11M11 1c8 0 13 6 13 14" stroke="#3a80d8" strokeWidth="2.200" fill="none" />
    </>
  ),
  tweb: (
    <>
      <path d="M3 1h13l6 6v16H3z" fill="#fff" stroke="#2050d0" />
      <circle cx="12" cy="14" r="6" fill="#3a90c0" />
      <path d="M9 10c3 2 5 4 7 3l-2 6-3-4z" fill="#28a040" />
    </>
  ),
  tclock: (
    <>
      <circle cx="12" cy="12" r="11" fill="#8a8a8a" />
      <circle cx="12" cy="12" r="8.500" fill="#dfe8ff" />
      <path d="M12 5v7h6" stroke="#222" strokeWidth="1.500" fill="none" />
    </>
  ),
  train: (
    <>
      <path d="M2 2h8v5H2z" fill="#e01818" />
      <path d="M2 7h8v4H2z" fill="#f0c020" />
      <path d="M2 11h8v4H2z" fill="#28c040" />
      <path d="M2 15h8v7H2z" fill="#1838e0" />
      <path d="M14 8l9 14" stroke="#111" strokeWidth="2.500" />
      <path d="M11 3l2 3 3 1-3 1-1 2-1-2z" fill="#fff" />
    </>
  ),
  trsurf: (
    <>
      <path d="M2 22l3-18h4v14z" fill="#4a90e0" />
      <path d="M9 6h13L12 18z" fill="none" stroke="#2a60c0" />
      <path d="M1 21h12" stroke="#e8b020" strokeWidth="2" />
      <path d="M12 8l10 14" stroke="#111" strokeWidth="2.500" />
    </>
  ),
  ttool: (
    <>
      <path d="M12 3h9l-3 3-5 13-4-2 5-11z" fill="#555" />
      <path d="M3 8c3-2 6 0 6 3l9 8-3 3-8-8c-3 1-6-2-4-6z" fill="#9aa0a8" stroke="#555" />
      <path d="M2 20l6-2 2 3-6 2z" fill="#f08020" />
    </>
  ),
  tw1: (
    <>
      <path d="M1 5l5-3v20l-5-2z" fill="#eee" stroke="#666" />
      <path d="M6 3h17v20H6z" fill="#fff" stroke="#666" />
      <path d="M8 4h14v14H8z" fill="#e03030" />
      <path d="M10 4h10v9l-5 4-5-4z" fill="#c8d8f8" />
    </>
  ),
  tw2: (
    <>
      <path d="M1 5l5-3v20l-5-2z" fill="#eee" stroke="#666" />
      <path d="M6 3h17v20H6z" fill="#fff" stroke="#666" />
      <circle cx="10" cy="7" r="2.200" fill="#2040e0" />
      <circle cx="10" cy="13" r="2.200" fill="#e02020" />
      <circle cx="10" cy="19" r="2.200" fill="#28a040" />
      <path d="M14 7h7M14 13h7M14 19h7" stroke="#333" />
    </>
  ),
  tnet: (
    <>
      <circle cx="17" cy="6" r="6" fill="#50c050" />
      <path d="M1 12l4-2v12l-4-1z" fill="#eee" stroke="#333" />
      <path d="M5 11h3v10H5z" fill="#38c038" />
      <path d="M9 16h6l2-4" stroke="#222" strokeDasharray="2 1" fill="none" />
    </>
  ),
};

function Rail() {
  return (
    <div className="w-[31px] shrink-0 bg-[#a8a8a8] border-r border-[#808080] flex flex-col">
      <div className="h-[46px] shrink-0 flex justify-center items-start pt-[7px]">
        <GearIcon className="w-[15px] h-[15px] mr-[2px] text-[#333]" />
      </div>
      {tabs.map((t) => (
        <div
          key={t.n}
          className={`ml-[5px] w-[26px] rounded-l-[5px] border border-r-0 border-[#777] flex items-center justify-center pr-[1px] bg-[#dcdcdc] shrink-0 ${t.cls}`}
        >
          <svg viewBox="0 0 24 24" className="w-[22px] h-[22px]" aria-hidden="true">
            {TabIcons[t.n]}
          </svg>
        </div>
      ))}
    </div>
  );
}

function GearIcon({ className }) {
  return (
    <svg viewBox="0 0 24 24" className={className} aria-hidden="true">
      <circle cx="12" cy="12" r="7" fill="none" stroke="currentColor" strokeWidth="4.500" />
      <circle cx="12" cy="12" r="10.500" fill="none" stroke="currentColor" strokeWidth="3" strokeDasharray="4 4.250" />
    </svg>
  );
}

const Check = () => (
  <svg viewBox="0 0 12 12" className="w-[13px] h-[12px] shrink-0" aria-hidden="true">
    <path d="M1 6l3 4 7-8" fill="none" stroke="#10c040" strokeWidth="2.600" />
  </svg>
);

const CheckBox = () => (
  <div className="w-[12px] h-[12px] border border-black bg-white flex items-center justify-center shrink-0">
    <Check />
  </div>
);

const TreeIco = {
  clock: TabIcons.tclock,
  view: (
    <>
      <path d="M12 2l9 5v10l-9 5-9-5V7z" fill="#d8f4e0" stroke="#20a060" strokeWidth="1.500" />
      <path d="M3 7l9 5 9-5M12 12v10M7 4l10 16M17 4L7 20" stroke="#20a060" fill="none" />
      <path d="M12 22l7-4" stroke="#f06020" strokeWidth="2" />
    </>
  ),
  cam: (
    <>
      <path d="M2 9l15-7 3 14-15 6z" fill="#fff" stroke="#e02020" strokeWidth="1.600" />
      <circle cx="12" cy="12" r="4" fill="#5a80e0" stroke="#222" />
      <path d="M17 12h6v5h-6z" fill="#aaa" stroke="#222" />
    </>
  ),
  folder: (
    <>
      <path d="M2 8h7l2 2h8v11H2z" fill="#c89020" stroke="#705010" />
      <path d="M2 21l4-9h17l-4 9z" fill="#fce090" stroke="#705010" />
    </>
  ),
  expr: (
    <>
      <path d="M2 8h7l2 2h8v11H2z" fill="#c89020" stroke="#705010" />
      <path d="M2 21l4-9h17l-4 9z" fill="#fce090" stroke="#705010" />
      <path d="M13 2h9M13 6h9" stroke="#2040b0" strokeWidth="1.400" />
    </>
  ),
  csys: (
    <>
      <path d="M6 20V6M6 20l12-6M6 20l12 3" stroke="#333" fill="none" />
      <path d="M6 10l12 5v6L6 16z" fill="#e0e0d0" stroke="#333" />
      <path d="M6 6V1" stroke="#1030d0" strokeWidth="1.500" />
      <path d="M14 13l8-5" stroke="#20a040" strokeWidth="1.500" />
      <path d="M16 21l6 2" stroke="#d02020" strokeWidth="1.500" />
    </>
  ),
  arc: (
    <>
      <path d="M3 3c9 0 16 8 18 18" fill="none" stroke="#111" strokeWidth="1.500" />
      <Dot x={3} y={3} r={2.500} /><Dot x={21} y={20} r={2.500} />
    </>
  ),
  tube: (
    <>
      <path d="M4 12l13-7 4 7-13 8z" fill="#7ca0f0" stroke="#5070c0" />
      <ellipse cx="6" cy="16" rx="4" ry="5" fill="#cfdcff" stroke="#5070c0" />
    </>
  ),
  cross: <path d="M12 3v18M2 12h20" stroke="#111" strokeWidth="1.500" />,
};

const TI = ({ n, className = "" }) => (
  <svg viewBox="0 0 24 24" className={`w-[16px] h-[16px] shrink-0 ${className}`} aria-hidden="true">
    {TreeIco[n]}
  </svg>
);

const Exp = ({ open }) => (
  <div className="absolute left-[5px] top-[5px] w-[9px] h-[9px] border border-[#999] bg-white flex items-center justify-center">
    <div className="w-[5px] h-px bg-black" />
    {!open && <div className="absolute w-px h-[5px] bg-black" />}
  </div>
);

const kids = [
  ["csys", "基准坐标系", "(0)"],
  ["arc", "圆弧", "(2)"],
  ["tube", "管道", "(3)"],
  ["cross", "十点", "(4)"],
  ["csys", "基准坐标系", "(5)", true],
];

function Row({ odd, children }) {
  return (
    <div className={`h-[20px] relative flex items-center border-b border-[#e8e8e8] whitespace-pre ${odd ? "bg-[#f6f6f6]" : "bg-white"}`}>
      {children}
    </div>
  );
}

function Tree() {
  const blanks = Array.from({ length: 13 });
  return (
    <div className="mx-[8px] w-[190px] h-[505px] border-2 border-[#8a8a8a] border-t-[#9a9a9a] bg-white flex flex-col overflow-hidden relative text-[14.7px] text-[#222] shrink-0">
      <div className="h-[19px] shrink-0 bg-linear-to-b from-[#e8e8e8] to-[#d4d4d4] border-b border-[#777] flex items-center pl-[6px]">
        名称
        <div className="ml-[9px] w-0 h-0 border-x-[5px] border-x-transparent border-b-[5px] border-b-black" />
      </div>
      <div className="flex-1 overflow-hidden relative">
        <div className="absolute left-[9px] top-[10px] h-[80px] border-l border-dotted border-[#777] z-10" />
        <div className="absolute left-[28px] top-[90px] h-[101px] border-l border-dotted border-[#777] z-10" />
        <Row>
          <div className="absolute left-[10px] top-[9px] w-[10px] border-t border-dotted border-[#777]" />
          <TI n="clock" className="ml-[19px] mr-[3px]" />历史记录模式
        </Row>
        <Row odd>
          <Exp />
          <TI n="view" className="ml-[19px] mr-[3px]" />模型视图
        </Row>
        <Row>
          <Exp />
          <div className="ml-[20px] mr-[1px]"><Check /></div>
          <TI n="cam" className="mr-[4px]" />摄像机
        </Row>
        <Row odd>
          <Exp />
          <TI n="expr" className="ml-[19px] mr-[3px]" />用户表达式
        </Row>
        <Row>
          <Exp open />
          <TI n="folder" className="ml-[19px] mr-[3px]" />模型历史记录
        </Row>
        {kids.map(([ic, txt, num, bold], i) => (
          <Row key={num} odd={i % 2 === 0}>
            <div className="absolute left-[29px] top-[9px] w-[11px] border-t border-dotted border-[#777]" />
            <div className="ml-[40px] mr-[1px]"><CheckBox /></div>
            <TI n={ic} className="mr-[3px]" />
            <span className={bold ? "font-bold" : ""}>
              {txt}
              <Num>{num}</Num>
            </span>
          </Row>
        ))}
        {blanks.map((_, i) => (
          <Row key={i} odd={i % 2 === 0} />
        ))}
      </div>
      <div className="h-[20px] shrink-0 flex bg-[#d0ccc4]">
        <ScrollBtn dir="l" />
        <div className="w-[48px] bg-[#d4d0c8] border-r-2 border-b-2 border-[#777] border-l border-l-white" />
        <div className="flex-1 bg-[repeating-conic-gradient(#e8e8e8_0_25%,#ffffff_0_50%)] bg-[length:2px_2px]" />
        <ScrollBtn dir="r" />
      </div>
    </div>
  );
}

const ScrollBtn = ({ dir }) => (
  <div className="w-[19px] bg-[#d4d0c8] border-r-2 border-b-2 border-[#666] border-l border-l-white flex items-center justify-center shrink-0">
    {dir === "l" ? (
      <div className="w-0 h-0 border-y-[5px] border-y-transparent border-r-[5px] border-r-black" />
    ) : (
      <div className="w-0 h-0 border-y-[5px] border-y-transparent border-l-[5px] border-l-black" />
    )}
  </div>
);

const Chevron = ({ up, className = "" }) => (
  <svg viewBox="0 0 12 8" className={`w-[12px] h-[8px] ${className}`} aria-hidden="true">
    <path d={up ? "M1 7l5-5 5 5" : "M1 1l5 5 5-5"} fill="none" stroke="#555" strokeWidth="2.400" />
  </svg>
);

function NavPanel() {
  return (
    <div className="w-[208px] shrink-0 bg-[#ececec] flex flex-col">
      <div className="h-[36px] shrink-0 flex items-center pl-[13px] pr-[15px] pt-[3px] font-bold text-[15.5px] text-[#222]">
        <span className="pt-[3px]">部件导航器</span>
        <div className="ml-auto w-[15px] h-[15px] border border-black border-t-[3px] bg-white" />
      </div>
      <Tree />
      <div className="h-[13px] shrink-0 flex items-center mx-[7px]">
        <div className="flex-1 h-[2px] bg-white border-t border-[#bbb]" />
        <div className="w-[31px] h-[6px] mx-[4px] bg-[#d0d0d0] border border-[#aaa]" />
        <div className="flex-1 h-[2px] bg-white border-t border-[#bbb]" />
      </div>
      {["相依性", "细节", "预览"].map((t) => (
        <div key={t} className="mx-[8px] w-[190px] h-[26px] shrink-0 flex bg-linear-to-b from-[#f8f8f8] via-[#f2f2f2] via-50% to-[#d4d4d4] border-b-2 border-[#999] border-x border-x-[#bbb] text-[14.7px] text-[#14145a] items-center">
          <span className="pl-[5px] pt-[3px] flex-1">{t}</span>
          <div className="w-[26px] h-full border-l-2 border-[#999] flex items-center justify-center">
            <Chevron />
          </div>
        </div>
      ))}
    </div>
  );
}

function SectionHead({ title }) {
  return (
    <div className="h-[25px] flex items-center bg-linear-to-b from-[#fafafa] via-[#f4f4f4] via-50% to-[#dcdcdc] border-b-2 border-[#888] text-[14.7px] text-[#14145a]">
      <span className="pl-[7px] pt-[3px] flex-1">{title}</span>
      <div className="w-[26px] h-full border-l border-[#aaa] flex items-center justify-center">
        <Chevron up />
      </div>
    </div>
  );
}

const DlgBtn = ({ children, green }) => (
  <div className={`w-[58px] h-[21px] rounded-[3px] border border-[#555] flex items-center justify-center text-[14.7px] text-[#111] bg-linear-to-b ${green ? "from-[#e4f6da] to-[#74cc68]" : "from-[#fbfbfb] to-[#cacaca]"}`}>
    <span className="pt-[1px]">{children}</span>
  </div>
);

function Dialog() {
  return (
    <div className="absolute left-[238px] top-[105px] w-[353px] h-[305px] z-20 bg-[#ebebeb] rounded-t-[5px] border border-[#444] border-b-4 border-b-[#222] flex flex-col text-[14.7px] text-[#222]">
      <div className="h-[24px] shrink-0 rounded-t-[4px] bg-linear-to-b from-[#777] via-[#1c1c1c] via-25% to-[#1a1a1a] flex items-center text-white font-bold text-[15.5px]">
        <div className="w-[24px] h-full flex items-center justify-center border-r border-[#888]">
          <GearIcon className="w-[14px] h-[14px] text-white" />
        </div>
        <span className="pl-[10px] pt-[1px] flex-1">等参数曲线</span>
        <div className="w-[24px] h-full flex items-center justify-center border-l border-[#aaa]">
          <svg viewBox="0 0 12 12" className="w-[12px] h-[12px]" aria-hidden="true">
            <path d="M2 10c4 2 8 0 8-4 0-3-3-4-5-3" fill="none" stroke="#fff" strokeWidth="2.200" />
            <path d="M6 0v6L2 3z" fill="#fff" />
          </svg>
        </div>
        <div className="w-[23px] h-full flex items-center justify-center border-l border-[#aaa]">
          <svg viewBox="0 0 12 12" className="w-[12px] h-[12px]" aria-hidden="true">
            <path d="M1 1l10 10M11 1L1 11" stroke="#fff" strokeWidth="2.600" />
          </svg>
        </div>
      </div>
      <div className="mx-[6px] mt-[4px] flex flex-col">
        <SectionHead title="面" />
        <div className="h-[48px] bg-[#d0d0d0] flex items-center pl-[8px] pr-[9px]">
          <div className="flex-1 h-[31px] rounded-l-[6px] bg-linear-to-r from-[#e2a368] via-[#e0ad7e] via-45% to-[#d8d4d0] flex items-center pl-[3px]">
            <Check />
            <span className="ml-[5px]">
              选择面
              <Num>(1)</Num>
            </span>
          </div>
          <div className="w-[30px] h-[30px] rounded-[4px] border border-[#d86020] bg-linear-to-b from-[#f8e8d8] to-[#f0b070] flex items-center justify-center">
            <svg viewBox="0 0 24 24" className="w-[23px] h-[23px]" aria-hidden="true">
              <path d="M12 3l9 4-9 4-9-4z" fill="#f8f8f8" stroke="#999" />
              <path d="M3 7l9 4v10l-9-4z" fill="#f8a020" stroke="#e03020" />
              <path d="M21 7l-9 4v10l9-4z" fill="#e8e8e8" stroke="#999" />
            </svg>
          </div>
        </div>
        <SectionHead title="等参数曲线" />
        <div className="h-[119px] bg-[#d0d0d0] pl-[9px] pr-[10px] flex flex-col">
          <div className="flex items-center mt-[8px] h-[23px]">
            <span>方向</span>
            <Combo className="ml-auto w-[129px] h-[23px]">
              <svg viewBox="0 0 24 24" className="w-[18px] h-[18px] ml-[3px]" aria-hidden="true">{I.surf}</svg>
              <span className="ml-[2px]">V</span>
            </Combo>
          </div>
          <div className="flex items-center mt-[5px] h-[24px]">
            <span>位置</span>
            <Combo className="ml-auto w-[129px] h-[24px]">
              <svg viewBox="0 0 24 24" className="w-[18px] h-[18px] ml-[3px]" aria-hidden="true">
                <path d="M3 14l12-9 7 5-12 9z" fill="#8fb0f0" stroke="#5070c0" />
                <path d="M7 11l7 5M11 8l7 5" stroke="#fff" />
              </svg>
              <span className="ml-[4px]">均匀</span>
            </Combo>
          </div>
          <div className="flex items-center mt-[5px] h-[18px]">
            <span className="pt-[2px]">数量</span>
            <div className="ml-auto w-[72px] h-[19px] flex items-center bg-white border border-[#8a8a8a] rounded-[4px] overflow-hidden pl-[4px]">
              <div className="w-[40px] h-[15px] bg-[#0a246a] text-white text-right pr-[1px] text-[14px] leading-[15px]">6</div>
              <div className="ml-auto w-[19px] h-full flex flex-col items-center justify-center gap-[2px] bg-linear-to-b from-[#4f8fdc] to-[#b4dcf8]">
                <div className="w-0 h-0 border-x-[5px] border-x-transparent border-b-[4px] border-b-[#111c3a]" />
                <div className="w-0 h-0 border-x-[5px] border-x-transparent border-t-[4px] border-t-[#111c3a]" />
              </div>
            </div>
          </div>
          <div className="flex items-center mt-[5px] h-[19px] text-[#a8a8a8]">
            <div className="w-[16px] h-[15px] rounded-[3px] border border-[#888] bg-linear-to-b from-[#f0f0f0] to-[#c4c4c4]" />
            <span className="ml-[11px] pt-[2px]">间距</span>
            <div className="ml-auto mr-[12px] w-[57px] h-[2px] bg-[#f0f0f0] border-t border-[#aaa] relative">
              <div className="absolute left-[13px] -top-[10px] w-[9px] h-[20px] rounded-[4px] bg-[#e8e8e8] border border-[#bbb]" />
            </div>
            <div className="w-[72px] h-[19px] rounded-[3px] border border-[#aaa] bg-[#d6d6d6] text-right pr-[4px] leading-[18px] text-[14px] text-[#8c8c8c]">25.0000</div>
          </div>
        </div>
        <div className="h-[14px] bg-linear-to-b from-[#f8f8f8] to-[#e0e0e0] border-b border-[#888] flex items-center justify-center gap-[3px]">
          <svg viewBox="0 0 36 8" className="w-[40px] h-[8px]" aria-hidden="true">
            <path d="M1 1l4 4 4-4M14 1l4 4 4-4M27 1l4 4 4-4" fill="none" stroke="#111" strokeWidth="2" />
          </svg>
        </div>
        <div className="h-px mt-[3px] bg-[#aaa] border-b border-white" />
        <div className="flex mt-[5px] justify-end gap-[7px] pr-[11px]">
          <DlgBtn>确定</DlgBtn>
          <DlgBtn green>应用</DlgBtn>
          <DlgBtn>取消</DlgBtn>
        </div>
      </div>
    </div>
  );
}

const ellipses = [
  ["#e8962e", 785.5, 469.5, 300, 206, 1.3],
  ["#c6c6c6", 784.5, 479, 290.5, 178, 1.6],
  ["#c6c6c6", 784.5, 457.5, 261, 157.5, 1.6],
  ["#c6c6c6", 786, 476, 251, 139, 1.6],
  ["#2f66c8", 784.5, 477.5, 292, 195.5, 2],
  ["#2f66c8", 784, 482, 251, 156, 2],
  ["#2f66c8", 797, 464.5, 238, 138.5, 2],
  ["#2f66c8", 785.5, 471, 225, 132, 2],
  ["#e8962e", 785.5, 469.5, 224.5, 131.5, 1.3],
];

function Viewport() {
  return (
    <div className="flex-1 bg-black relative overflow-hidden">
      <svg viewBox="239 154 1315 638" className="absolute inset-0 w-full h-full" aria-hidden="true">
        {ellipses.map(([c, cx, cy, rx, ry, w], i) => (
          <ellipse key={i} cx={cx} cy={cy} rx={rx} ry={ry} fill="none" stroke={c} strokeWidth={w} />
        ))}
        {/* wcs blue */}
        <g fill="none" stroke="#1010e8" strokeWidth="1.300">
          <path d="M721 405v51l65.500 14L808 428l-87-23M721 456l26-40 61 12M783.700 418l22-40 2 50M781 382l5 88 42-77" />
          <path d="M670 445l116.500 25" />
        </g>
        <path d="M658 443l15-3-1 7zM781 365l-3 12h6zM833 385l-7 6 5 3z" fill="#1010e8" />
        <text x="648" y="449" fill="#1010e8" fontSize="14" fontFamily="Liberation Sans">Y</text>
        <text x="776" y="369" fill="#1010e8" fontSize="14" fontFamily="Liberation Sans">Z</text>
        <text x="829" y="393" fill="#1010e8" fontSize="14" fontFamily="Liberation Sans">Z</text>
        {/* brown work box */}
        <g fill="none" stroke="#8a5a50" strokeWidth="1.100">
          <path d="M863.500 300.700L902 308v35l-14 23-39-9v-32zM849 357l15-22 38 8M861.600 270L864 335l-24 40" />
        </g>
        <path d="M840 368l4 7-4 7-4-7zM861 270l3 5-3 8-3-8z" fill="#9a6a60" />
        <path d="M904 340l24 6" stroke="#ccc" />
        <path d="M922 340l18 8-21-1z" fill="#fff" />
        <text x="943" y="356" fill="#ddd" fontSize="13" fontFamily="Liberation Sans">X</text>
        <text x="856" y="268" fill="#8a6a60" fontSize="13" fontFamily="Liberation Sans">Y</text>
        {/* uv marker */}
        <path d="M679 606l1.500 45.500L735 663" fill="none" stroke="#d88a20" strokeWidth="1.200" />
        <path d="M678.500 590l5 9-5 9-4-9z" fill="#b87a2a" />
        <path d="M735 660l10-3 24 14-24-4z" fill="#f0b060" />
        <text x="771" y="672" fill="#e89a30" fontSize="13" fontFamily="Liberation Sans">U</text>
        <text x="678" y="579" fill="#e89a30" fontSize="13" fontFamily="Liberation Sans">V</text>
        {/* hand drawn marks */}
        <path
          d="M662.700 591.700C659 580 657.500 566 658 552c0-8 5-12 12-13 10-2 22-3 32-2 10 1 18 4 21 9 5 7 9 14 9 21 0 5-2 9-6 11-9 4-16 10-26 10-9 0-18-3-25-5"
          fill="none"
          stroke="#f020e8"
          strokeWidth="7"
          strokeLinecap="round"
        />
        <path d="M713 703.500c30-1 80-1 112 1" fill="none" stroke="#f020e8" strokeWidth="6.500" strokeLinecap="round" />
        <polygon points="706.200,532.800 831.900,299.300 828.400,297.300 850,275 842.400,305.100 838.900,303.100 707,533.200" fill="#f53a3a" />
        <polygon points="784.600,683.800 926,392.800 922.800,391.200 943.500,368 937.200,398.400 934,396.800 785.400,684.200" fill="#f53a3a" />
        {/* view triad */}
        <g fill="none" stroke="#aaa">
          <path d="M272 712l10-10 18 4v22l-8 8-20-7z" fill="#8a8a8a" fillOpacity=".8" />
          <path d="M272 712l20 6 8-12M292 718v18" />
        </g>
        <path d="M292 736l-32-9" stroke="#30a040" strokeWidth="2" />
        <path d="M292 736l12-20" stroke="#d03030" strokeWidth="2" />
        <path d="M291 736v-22" stroke="#1030d0" strokeWidth="2.500" />
        <circle cx="292" cy="736" r="4.500" fill="#ddd" />
        <text x="250" y="733" fill="#30a040" fontSize="12" fontFamily="Liberation Sans">Y</text>
        <text x="303" y="717" fill="#d03030" fontSize="12" fontFamily="Liberation Sans">X</text>
        <text x="287" y="710" fill="#1030d0" fontSize="12" fontFamily="Liberation Sans">Z</text>
      </svg>
      <div className="absolute left-[822px] top-[101px] text-[31px] leading-[41px] text-[#f53a3a] font-light whitespace-pre [font-family:'Liberation_Serif','Noto_Sans_CJK_SC',serif]">
        <div>X  Y  方向建议与U  V方向保持</div>
        <div>一致</div>
      </div>
    </div>
  );
}

function RightRail() {
  return (
    <div className="w-[42px] shrink-0 bg-linear-to-r from-[#e4e4e4] to-[#d8d8d8] flex flex-col relative">
      <div className="h-[5px] mt-[4px] mx-[6px] shrink-0 border-t-2 border-dotted border-[#9a9a9a]" />
      <div className="absolute right-[1px] top-[24px] w-0 h-0 border-x-[3.5px] border-x-transparent border-t-[4px] border-t-black" />
      {rail.map((n) => (
        <div key={n} className="h-[31px] shrink-0 pl-[11px] flex items-center">
          <Ico n={n} />
        </div>
      ))}
      <div className="absolute left-[16px] top-[591px] w-[20px] h-[47px] z-10">
        <svg viewBox="0 0 20 47" className="absolute inset-0 w-full h-full" aria-hidden="true">
          <path d="M0 4c6 3 14 3 20 0l-1 37-6 5H7z" fill="#f0304a" />
          <ellipse cx="11" cy="7" rx="7" ry="4.500" fill="#222" />
          <circle cx="8" cy="7" r="1.400" fill="#fff" />
          <circle cx="14" cy="7" r="1.400" fill="#fff" />
        </svg>
        <div className="absolute left-[4px] top-[14px] w-[13px] text-white font-bold text-[11px] leading-[13px] [font-family:'Noto_Sans_CJK_SC',sans-serif]">返场</div>
      </div>
      <div className="absolute right-0 top-[587px] w-[6px] h-[51px] bg-[#2c3c4c] rounded-tl-[2px]" />
    </div>
  );
}

function BottomBar() {
  return (
    <div className="h-[34px] shrink-0 bg-linear-to-b from-[#e2e2e2] to-[#d4d4d4] border-b-2 border-[#f2f2f2] flex items-center text-[14.5px] text-[#222] relative">
      <div className="w-[6px] shrink-0" />
      <Combo className="w-[146px] h-[19px]">
        <span className="pl-[2px]">面</span>
      </Combo>
      <div className="w-[10px] shrink-0" />
      <Combo className="w-[152px] h-[19px]">
        <span className="pl-[1px]">仅在工作部件内</span>
      </Combo>
      <Tools items={bottomA} />
      <span className="ml-[2px] whitespace-nowrap text-[15px]">更新以获取外部更改</span>
      <div className="absolute right-[1px] bottom-[8px] w-0 h-0 border-x-[3.5px] border-x-transparent border-t-[4px] border-t-black" />
    </div>
  );
}

function StatusBar() {
  return (
    <div className="h-[21px] shrink-0 bg-[#dadada] flex items-center relative text-[15.5px] font-bold text-[#111]">
      <span className="pl-[4px] w-[743px] border-r border-[#b8b8b8] h-full leading-[20px]">选择面</span>
      <div className="ml-auto flex items-center h-full font-normal">
        <svg viewBox="0 0 28 24" className="w-[27px] h-[24px] -mt-[3px]" aria-hidden="true">
          <path d="M5 3l20-3 3 20-22 4z" fill="#f0622a" />
        </svg>
        <div className="w-[174px] flex items-center text-[#1c6fc0] relative pt-[2px]">
          <span className="absolute -left-[20px] font-bold text-white text-[18px] leading-none [font-family:'Liberation_Sans',sans-serif]">S</span>
          <span className="ml-[6px] font-bold text-[15px]">英</span>
          <span className="ml-[7px] w-[10px] font-bold leading-none">·,</span>
          <svg viewBox="0 0 16 16" className="ml-[10px] w-[16px] h-[16px]" aria-hidden="true">
            <circle cx="8" cy="8" r="7" fill="none" stroke="currentColor" strokeWidth="1.600" />
            <circle cx="5.500" cy="6.500" r="1" fill="currentColor" />
            <circle cx="10.500" cy="6.500" r="1" fill="currentColor" />
            <path d="M4.500 10c2 2 5 2 7 0" fill="none" stroke="currentColor" strokeWidth="1.300" />
          </svg>
          <svg viewBox="0 0 12 16" className="ml-[8px] w-[12px] h-[16px]" aria-hidden="true">
            <rect x="3" y="0" width="6" height="10" rx="3" fill="currentColor" />
            <path d="M1 7c0 6 10 6 10 0M6 12v3M3 15.500h6" fill="none" stroke="currentColor" strokeWidth="1.400" />
          </svg>
          <svg viewBox="0 0 16 12" className="ml-[8px] w-[16px] h-[12px]" aria-hidden="true">
            <rect x=".7" y=".7" width="14.600" height="10.600" rx="1.500" fill="#fff" stroke="currentColor" strokeWidth="1.400" />
            <path d="M3 4h10M3 6.500h10M5 9h6" stroke="currentColor" strokeWidth="1.300" strokeDasharray="1.500 .7" />
          </svg>
          <svg viewBox="0 0 16 16" className="ml-[9px] w-[15px] h-[15px]" aria-hidden="true">
            <circle cx="7" cy="4" r="3" fill="#a8b4c0" />
            <path d="M1 14c0-7 11-7 12 0z" fill="#a8b4c0" />
            <rect x="10" y="9" width="6" height="6" fill="#fff" stroke="#8a98a8" />
          </svg>
          <svg viewBox="0 0 16 16" className="ml-[6px] w-[15px] h-[15px]" aria-hidden="true">
            <path d="M5 1l3 2 3-2 5 3-2 4-2-1v8H4V7L2 8 0 4z" fill="currentColor" />
          </svg>
          <svg viewBox="0 0 16 16" className="ml-[8px] w-[14px] h-[14px]" aria-hidden="true">
            <path d="M1 1h6v6H1zM9 1h6v6H9zM1 9h6v6H1zM9 9h6v6H9z" fill="currentColor" />
          </svg>
        </div>
      </div>
    </div>
  );
}

function Watermark() {
  return (
    <div className="absolute left-[1313px] top-[753px] w-[260px] h-[82px] z-30 pointer-events-none">
      <svg viewBox="0 0 72 82" className="absolute left-0 top-0 w-[71px] h-[82px]" aria-hidden="true">
        <path d="M36 0l35 20v41L36 82 0 61V20z" fill="#3fa6e0" fillOpacity=".58" />
        <path d="M36 0L0 20v20L20 17l30 4z" fill="#b8c8d0" fillOpacity=".35" />
        <path d="M36 20L18 30v22l18 10 18-10V30z" fill="#fff" fillOpacity=".2" />
        <path d="M36 22l16 9-16 9-16-9zM20 33l15 9v18l-15-9z" fill="#000" fillOpacity=".3" />
        <path d="M12 22c10-6 24-8 40-4M60 26c6 14 4 28-4 40M50 66c-10 6-24 8-36-2" fill="none" stroke="#000" strokeOpacity=".45" strokeWidth="1" />
      </svg>
      <div className="absolute left-[80px] top-[9px] text-[41px] leading-[42px] font-bold text-white/35 whitespace-nowrap [font-family:'Liberation_Sans','Noto_Sans_CJK_SC',sans-serif]">3D世界网</div>
      <div className="absolute left-[81px] top-[56px] text-[13px] leading-[14px] tracking-[4.300px] text-white/60 whitespace-nowrap [font-family:'Liberation_Sans',sans-serif]">WWW.3DSJW.COM</div>
    </div>
  );
}

export default function App() {
  return (
    <div className="w-[1596px] h-[847px] relative overflow-hidden flex flex-col bg-black [font-family:'Liberation_Mono','Noto_Sans_CJK_SC',monospace]">
      <TitleBar />
      <MenuBar />
      <Toolbars />
      <div className="flex-1 flex min-h-0">
        <Rail />
        <NavPanel />
        <Viewport />
        <RightRail />
      </div>
      <BottomBar />
      <StatusBar />
      <Dialog />
      <Watermark />
    </div>
  );
}
